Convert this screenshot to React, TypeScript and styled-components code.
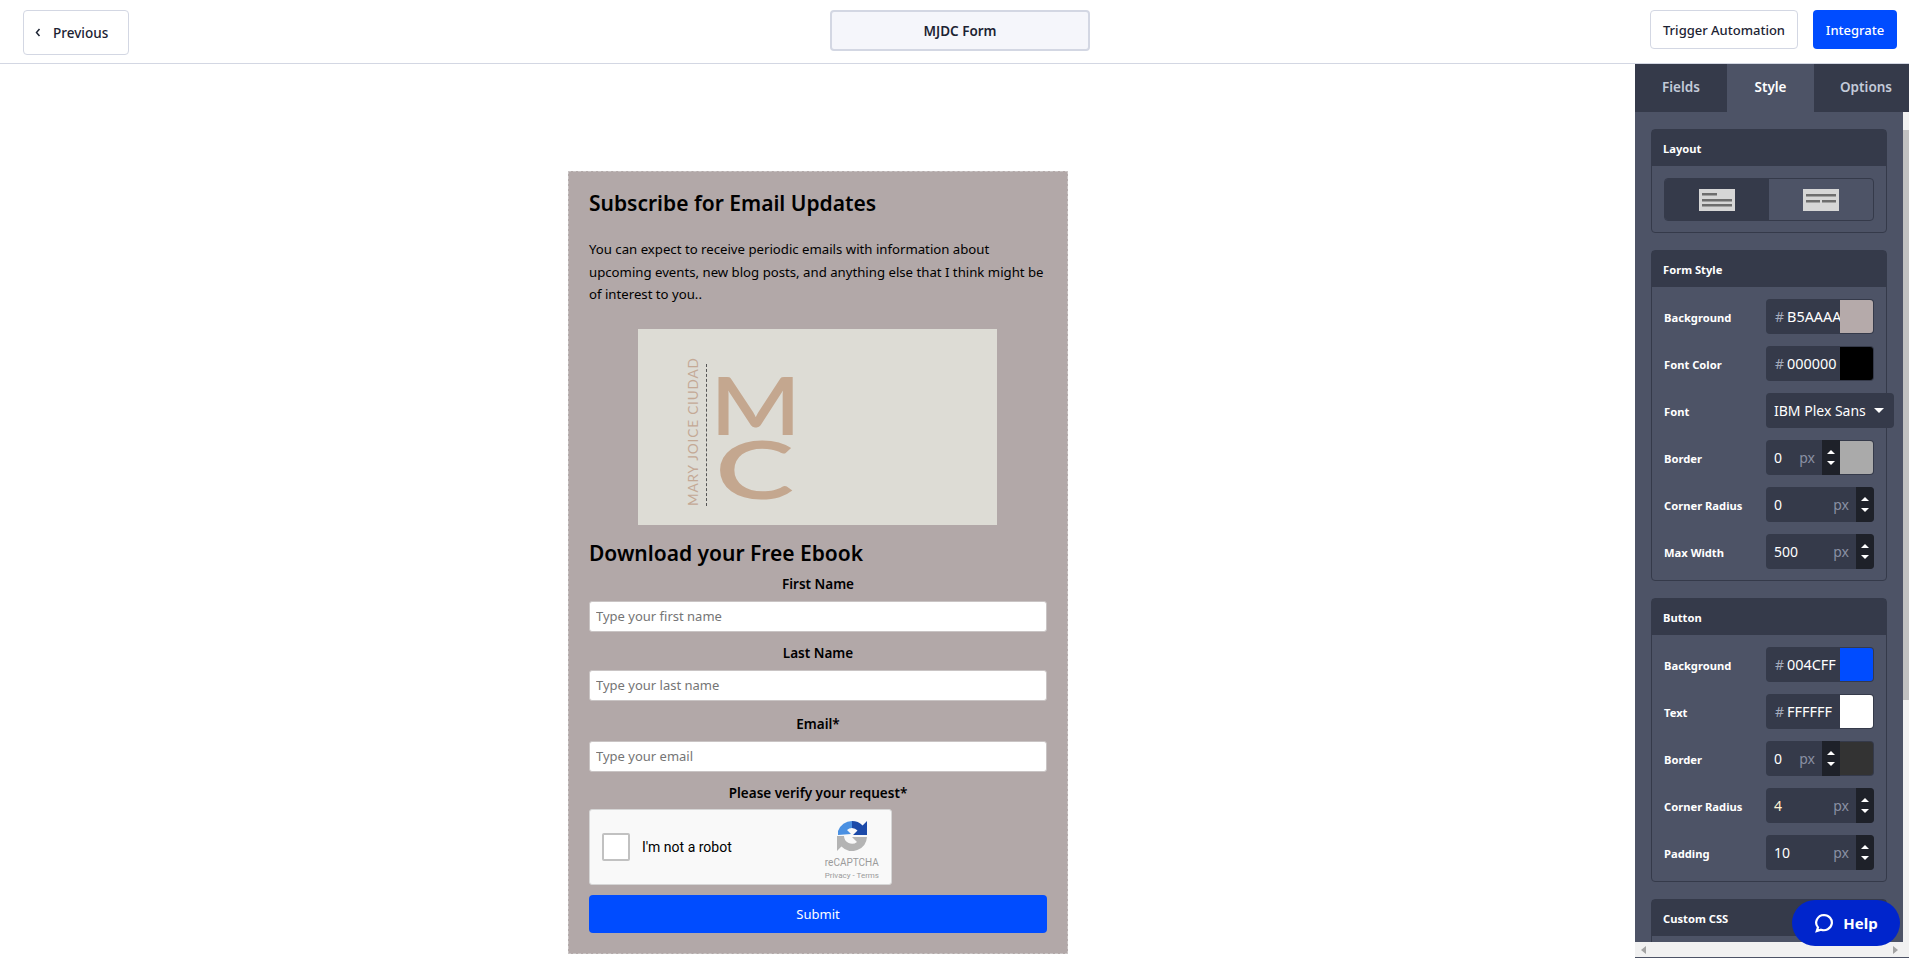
import React from "react";
import styled, { createGlobalStyle } from "styled-components";

const GlobalStyle = createGlobalStyle`
    html, body, #root {
        margin: 0;
        height: 100%;
    }
    body {
        font-family: "Noto Sans", "Open Sans", sans-serif;
        background-color: #ffffff;
        overflow: hidden;
    }
    * {
        box-sizing: border-box;
    }
`;

const Page = styled.div`
    height: 958px;
    display: flex;
    flex-direction: column;
    position: relative;
    overflow: hidden;
`;

const TopBar = styled.header`
    flex: 0 0 64px;
    display: grid;
    grid-template-columns: 1fr 260px 1fr;
    padding: 10px 12px 0 23px;
    border-bottom: 1px solid #d3d7e3;
`;

const TopLeft = styled.div`
    display: flex;
    align-items: flex-start;
`;

const TopRight = styled.div`
    display: flex;
    justify-content: flex-end;
    align-items: flex-start;
    gap: 15px;
`;

const BackButton = styled.button`
    width: 106px;
    height: 45px;
    padding: 0 0 0 11px;
    display: flex;
    align-items: center;
    gap: 12px;
    color: #1c2333;
    background-color: #ffffff;
    border: 1px solid #d3d7e3;
    border-radius: 4px;
    font: 500 13.5px "Noto Sans", sans-serif;
`;

const FormTitle = styled.div`
    height: 41px;
    display: flex;
    align-items: center;
    justify-content: center;
    color: #1c2333;
    background-color: #f5f6fb;
    border: 2px solid #d3d7e3;
    border-radius: 4px;
    font-size: 13.5px;
    font-weight: 600;
`;

const OutlineButton = styled.button`
    width: 148px;
    height: 39px;
    color: #1c2333;
    background-color: #ffffff;
    border: 1px solid #d3d7e3;
    border-radius: 4px;
    font: 500 13px "Noto Sans", sans-serif;
`;

const PrimaryButton = styled.button`
    width: 84px;
    height: 39px;
    color: #ffffff;
    background-color: #004cff;
    border: 0;
    border-radius: 4px;
    font: 500 13px "Noto Sans", sans-serif;
`;

const Body = styled.div`
    flex: 1;
    min-height: 0;
    display: flex;
`;

const Canvas = styled.main`
    flex: 1;
    min-width: 0;
    display: flex;
    justify-content: center;
    align-items: flex-start;
    padding-top: 107px;
`;

const FormCard = styled.form`
    width: 500px;
    height: 783px;
    margin-left: 1px;
    padding: 18px 20px 0;
    flex: 0 0 auto;
    color: #000000;
    background-color: #b2a8a8;
    border: 1px dashed #c9c4c4;
`;

const Heading = styled.h2<{ $top?: number }>`
    margin: ${(p) => p.$top ?? 0}px 0 0;
    font-size: 21px;
    line-height: 26px;
    font-weight: 600;
`;

const Intro = styled.p`
    margin: 22px 0 0;
    font-size: 13.2px;
    line-height: 22.5px;
`;

const LogoImage = styled.div`
    width: 359px;
    height: 196px;
    margin: 23px 0 0 49px;
    padding: 29px 0 0 49px;
    display: flex;
    align-items: flex-start;
    background-color: #dddcd5;
`;

const LogoName = styled.div`
    writing-mode: vertical-rl;
    transform: rotate(180deg);
    height: 148px;
    width: 12px;
    color: #c4a995;
    font: 400 13.6px/12px Lato, sans-serif;
    letter-spacing: 0.85px;
    white-space: nowrap;
`;

const LogoRule = styled.div`
    width: 0;
    height: 142px;
    margin: 6px 0 0 7px;
    border-left: 1px dashed #555555;
`;

const LogoLetters = styled.div`
    width: 78px;
    margin: 14px 0 0 9px;
    display: flex;
    flex-direction: column;
    align-items: center;
`;

const LogoLetter = styled.span<{ $stretch: number; $height: number }>`
    height: ${(p) => p.$height}px;
    color: #c4a78f;
    font: 600 80px/${(p) => p.$height}px Lato, sans-serif;
    transform: scaleX(${(p) => p.$stretch});
`;

const Field = styled.div<{ $top: number }>`
    margin-top: ${(p) => p.$top}px;
`;

const FieldLabel = styled.label`
    display: block;
    height: 18px;
    margin-bottom: 8px;
    text-align: center;
    font-size: 13.5px;
    line-height: 18px;
    font-weight: 600;
`;

const TextInput = styled.input`
    display: block;
    width: 458px;
    height: 31px;
    padding: 0 6px;
    color: #333333;
    background-color: #ffffff;
    border: 1px solid #c9c4c4;
    border-radius: 3px;
    font: 400 13px "Noto Sans", sans-serif;

    &::placeholder {
        color: #757575;
        opacity: 1;
    }
`;

const Captcha = styled.div`
    width: 303px;
    height: 76px;
    margin-top: -1px;
    padding: 0 12px 0 12px;
    display: flex;
    align-items: center;
    color: #000000;
    background-color: #f9f9f9;
    border: 1px solid #d6d6d6;
    border-radius: 3px;
`;

const CaptchaBox = styled.span`
    width: 28px;
    height: 28px;
    background-color: #ffffff;
    border: 2px solid #c1c1c1;
    border-radius: 2px;
`;

const CaptchaText = styled.span`
    margin-left: 12px;
    flex: 1;
    font: 400 14px Roboto, sans-serif;
`;

const CaptchaBrand = styled.div`
    align-self: flex-start;
    padding-top: 11px;
    display: flex;
    flex-direction: column;
    align-items: center;
    color: #9b9b9b;
    font-family: Roboto, sans-serif;
`;

const CaptchaName = styled.span`
    margin-top: 5px;
    font-size: 10px;
    line-height: 13px;
`;

const CaptchaLinks = styled.span`
    margin-top: 2px;
    font-size: 8px;
    line-height: 10px;
`;

const SubmitButton = styled.button`
    display: block;
    width: 458px;
    height: 38px;
    margin-top: 10px;
    color: #ffffff;
    background-color: #004cff;
    border: 0;
    border-radius: 4px;
    font: 400 13px "Noto Sans", sans-serif;
`;

const Sidebar = styled.aside`
    flex: 0 0 274px;
    min-width: 0;
    overflow: hidden;
    display: flex;
    flex-direction: column;
    background-color: #4d5366;
`;

const Tabs = styled.nav`
    flex: 0 0 48px;
    display: flex;
    overflow: hidden;
    background-color: #353a4a;
`;

const Tab = styled.div<{ $width: number; $active?: boolean }>`
    flex: 0 0 ${(p) => p.$width}px;
    padding-bottom: 2px;
    display: flex;
    align-items: center;
    justify-content: center;
    color: ${(p) => (p.$active ? "#ffffff" : "#c3cad9")};
    background-color: ${(p) => (p.$active ? "#4d5366" : "transparent")};
    font-size: 13.5px;
    font-weight: 600;
`;

const SideBody = styled.div`
    flex: 1;
    min-height: 0;
    display: flex;
`;

const SideScroll = styled.div`
    flex: 1;
    min-width: 0;
    padding: 17px 16px 0;
    overflow: hidden;
    display: flex;
    flex-direction: column;
    gap: 17px;
`;

const VerticalBar = styled.div`
    flex: 0 0 6px;
    padding-top: 18px;
    background-color: #f1f1f1;
`;

const VerticalThumb = styled.div`
    height: 570px;
    background-color: #c1c1c1;
`;

const HorizontalBar = styled.div`
    flex: 0 0 15px;
    margin-bottom: 1px;
    display: flex;
    align-items: center;
    justify-content: space-between;
    padding: 0 11px 0 6px;
    background-color: #f1f1f1;
`;

const Panel = styled.section`
    flex: 0 0 auto;
    border: 1px solid #353a4a;
    border-radius: 4px;
`;

const PanelHead = styled.div`
    height: 36px;
    padding-left: 11px;
    display: flex;
    align-items: center;
    color: #ffffff;
    background-color: #353a4a;
    font-size: 11.2px;
    font-weight: 700;
`;

const PanelBody = styled.div`
    padding: 12px 12px 11px;
    display: flex;
    flex-direction: column;
    gap: 12px;
`;

const LayoutToggle = styled.div`
    height: 43px;
    display: flex;
    border: 1px solid #353a4a;
    border-radius: 4px;
    overflow: hidden;
`;

const LayoutOption = styled.div<{ $active?: boolean }>`
    flex: 1;
    display: flex;
    align-items: center;
    justify-content: center;
    background-color: ${(p) => (p.$active ? "#353a4a" : "transparent")};
`;

const Row = styled.div`
    height: 35px;
    display: flex;
    align-items: center;
    justify-content: space-between;
`;

const RowLabel = styled.span`
    padding-top: 2px;
    color: #ffffff;
    font-size: 11.2px;
    font-weight: 700;
`;

const Control = styled.div<{ $overflow?: boolean }>`
    width: ${(p) => (p.$overflow ? "128px" : "108px")};
    height: 35px;
    margin-right: ${(p) => (p.$overflow ? "-20px" : "0")};
    display: flex;
    align-items: center;
    overflow: hidden;
    color: #ffffff;
    background-color: #353a4a;
    border-radius: 4px;
    font-size: 14px;
`;

const Hash = styled.span`
    margin-left: 9px;
    margin-right: 3px;
    color: #a5acbd;
`;

const HexValue = styled.span`
    flex: 1;
    min-width: 0;
    font-size: 14.4px;
    white-space: nowrap;
    overflow: hidden;
`;

const Swatch = styled.span<{ $color: string }>`
    flex: 0 0 33px;
    height: 33px;
    margin-right: 1px;
    background-color: ${(p) => p.$color};
    border-radius: 0 3px 3px 0;
`;

const NumberValue = styled.span<{ $warm?: boolean }>`
    flex: 1;
    margin-left: 8px;
    color: ${(p) => (p.$warm ? "#fff3d6" : "#ffffff")};
`;

const Unit = styled.span`
    margin-right: 7px;
    color: #8a90a3;
`;

const Stepper = styled.span`
    flex: 0 0 18px;
    height: 35px;
    display: flex;
    flex-direction: column;
    align-items: center;
    justify-content: center;
    gap: 7px;
    background-color: #1e2129;
`;

const ArrowUp = styled.i`
    width: 0;
    height: 0;
    border: 4px solid transparent;
    border-top: 0;
    border-bottom: 4px solid #ffffff;
`;

const ArrowDown = styled(ArrowUp)`
    border-bottom: 0;
    border-top: 4px solid #ffffff;
`;

const SelectValue = styled.span`
    flex: 1;
    margin-left: 8px;
    white-space: nowrap;
`;

const Caret = styled.i`
    margin-right: 10px;
    width: 0;
    height: 0;
    border: 5px solid transparent;
    border-bottom: 0;
    border-top: 5px solid #ffffff;
`;

const HelpButton = styled.button`
    position: absolute;
    left: 1792px;
    top: 900px;
    width: 108px;
    height: 46px;
    display: flex;
    align-items: center;
    justify-content: center;
    gap: 9px;
    color: #ffffff;
    background-color: #0025cc;
    border: 0;
    border-radius: 23px;
    font: 700 15px "Noto Sans", sans-serif;
`;

const ScrollArrow = styled.i<{ $left?: boolean }>`
    width: 0;
    height: 0;
    border: 4px solid transparent;
    ${(p) =>
        p.$left
            ? "border-left: 0; border-right: 5px solid #a3a3a3;"
            : "border-right: 0; border-left: 5px solid #a3a3a3;"}
`;

function LayoutIcon({ split }: { split?: boolean }) {
    return (
        <svg width="36" height="22" viewBox="0 0 36 22">
            <rect width="36" height="22" fill="#d6d6d6" />
            {split ? (
                <g fill="#6d6d6d">
                    <rect x="3" y="5" width="30" height="2.5" />
                    <rect x="3" y="11" width="14" height="2.5" />
                    <rect x="19" y="11" width="14" height="2.5" />
                </g>
            ) : (
                <g fill="#6d6d6d">
                    <rect x="3" y="4" width="15" height="2.5" />
                    <rect x="3" y="10" width="30" height="2.5" />
                    <rect x="3" y="15" width="30" height="2.5" />
                </g>
            )}
        </svg>
    );
}

function CaptchaLogo() {
    return (
        <svg width="30" height="30" viewBox="0 0 30 30">
            <path d="M15 0 L15 7 A8 8 0 0 0 10 9 L14 13 L1 14 L1 10 A15 15 0 0 1 15 0 Z" fill="#4a90e2" />
            <path d="M15 0 A15 15 0 0 1 25.6 4.4 L30 0 L30 14 L16 14 L20.5 9.5 A8 8 0 0 0 15 7 Z" fill="#1c4aa9" />
            <path d="M0 15 L7 15 A8 8 0 0 0 20 21 L15 16 L30 16 A15 15 0 0 1 4.4 25.6 L0 30 Z" fill="#b4b4b4" />
        </svg>
    );
}

function SwatchRow({ label, hex, color }: { label: string; hex: string; color: string }) {
    return (
        <Row>
            <RowLabel>{label}</RowLabel>
            <Control>
                <Hash>#</Hash>
                <HexValue>{hex}</HexValue>
                <Swatch $color={color} />
            </Control>
        </Row>
    );
}

function NumberRow({ label, value, color, warm }: { label: string; value: string; color?: string; warm?: boolean }) {
    return (
        <Row>
            <RowLabel>{label}</RowLabel>
            <Control>
                <NumberValue $warm={warm}>{value}</NumberValue>
                <Unit>px</Unit>
                <Stepper>
                    <ArrowUp />
                    <ArrowDown />
                </Stepper>
                {color && <Swatch $color={color} />}
            </Control>
        </Row>
    );
}

function FormField({ label, placeholder, top }: { label: string; placeholder: string; top: number }) {
    return (
        <Field $top={top}>
            <FieldLabel>{label}</FieldLabel>
            <TextInput placeholder={placeholder} />
        </Field>
    );
}

export default function App() {
    return (
        <Page>
            <GlobalStyle />
            <TopBar>
                <TopLeft>
                    <BackButton type="button">
                        <svg width="6" height="9" viewBox="0 0 6 9">
                            <path d="M4.5 1 L1.5 4.5 L4.5 8" fill="none" stroke="#1c2333" strokeWidth="1.5" />
                        </svg>
                        Previous
                    </BackButton>
                </TopLeft>
                <FormTitle>MJDC Form</FormTitle>
                <TopRight>
                    <OutlineButton type="button">Trigger Automation</OutlineButton>
                    <PrimaryButton type="button">Integrate</PrimaryButton>
                </TopRight>
            </TopBar>
            <Body>
                <Canvas>
                    <FormCard>
                        <Heading>Subscribe for Email Updates</Heading>
                        <Intro>
                            You can expect to receive periodic emails with information about upcoming events, new blog
                            posts, and anything else that I think might be of interest to you..
                        </Intro>
                        <LogoImage>
                            <LogoName>MARY JOICE CIUDAD</LogoName>
                            <LogoRule />
                            <LogoLetters>
                                <LogoLetter $stretch={1.21} $height={65}>M</LogoLetter>
                                <LogoLetter $stretch={1.49} $height={62}>C</LogoLetter>
                            </LogoLetters>
                        </LogoImage>
                        <Heading $top={15}>Download your Free Ebook</Heading>
                        <FormField top={9} label="First Name" placeholder="Type your first name" />
                        <FormField top={12} label="Last Name" placeholder="Type your last name" />
                        <FormField top={14} label="Email*" placeholder="Type your email" />
                        <Field $top={12}>
                            <FieldLabel>Please verify your request*</FieldLabel>
                            <Captcha>
                                <CaptchaBox />
                                <CaptchaText>I'm not a robot</CaptchaText>
                                <CaptchaBrand>
                                    <CaptchaLogo />
                                    <CaptchaName>reCAPTCHA</CaptchaName>
                                    <CaptchaLinks>Privacy - Terms</CaptchaLinks>
                                </CaptchaBrand>
                            </Captcha>
                        </Field>
                        <SubmitButton type="button">Submit</SubmitButton>
                    </FormCard>
                </Canvas>
                <Sidebar>
                    <Tabs>
                        <Tab $width={92}>Fields</Tab>
                        <Tab $width={87} $active>Style</Tab>
                        <Tab $width={104}>Options</Tab>
                    </Tabs>
                    <SideBody>
                        <SideScroll>
                            <Panel>
                                <PanelHead>Layout</PanelHead>
                                <PanelBody>
                                    <LayoutToggle>
                                        <LayoutOption $active>
                                            <LayoutIcon />
                                        </LayoutOption>
                                        <LayoutOption>
                                            <LayoutIcon split />
                                        </LayoutOption>
                                    </LayoutToggle>
                                </PanelBody>
                            </Panel>
                            <Panel>
                                <PanelHead>Form Style</PanelHead>
                                <PanelBody>
                                    <SwatchRow label="Background" hex="B5AAAA" color="#b5aaaa" />
                                    <SwatchRow label="Font Color" hex="000000" color="#000000" />
                                    <Row>
                                        <RowLabel>Font</RowLabel>
                                        <Control $overflow>
                                            <SelectValue>IBM Plex Sans</SelectValue>
                                            <Caret />
                                        </Control>
                                    </Row>
                                    <NumberRow label="Border" value="0" color="#aaaaaa" />
                                    <NumberRow label="Corner Radius" value="0" />
                                    <NumberRow label="Max Width" value="500" />
                                </PanelBody>
                            </Panel>
                            <Panel>
                                <PanelHead>Button</PanelHead>
                                <PanelBody>
                                    <SwatchRow label="Background" hex="004CFF" color="#004cff" />
                                    <SwatchRow label="Text" hex="FFFFFF" color="#ffffff" />
                                    <NumberRow label="Border" value="0" color="#333333" />
                                    <NumberRow label="Corner Radius" value="4" warm />
                                    <NumberRow label="Padding" value="10" />
                                </PanelBody>
                            </Panel>
                            <Panel>
                                <PanelHead>Custom CSS</PanelHead>
                                <PanelBody />
                            </Panel>
                        </SideScroll>
                        <VerticalBar>
                            <VerticalThumb />
                        </VerticalBar>
                    </SideBody>
                    <HorizontalBar>
                        <ScrollArrow $left />
                        <ScrollArrow />
                    </HorizontalBar>
                </Sidebar>
            </Body>
            <HelpButton type="button">
                <svg width="20" height="20" viewBox="0 0 20 20">
                    <path
                        d="M10 2 A8 7.6 0 1 1 7 16.7 L2.8 18 L4 14.4 A8 7.6 0 0 1 10 2 Z"
                        fill="none"
                        stroke="#ffffff"
                        strokeWidth="2.2"
                    />
                </svg>
                Help
            </HelpButton>
        </Page>
    );
}
